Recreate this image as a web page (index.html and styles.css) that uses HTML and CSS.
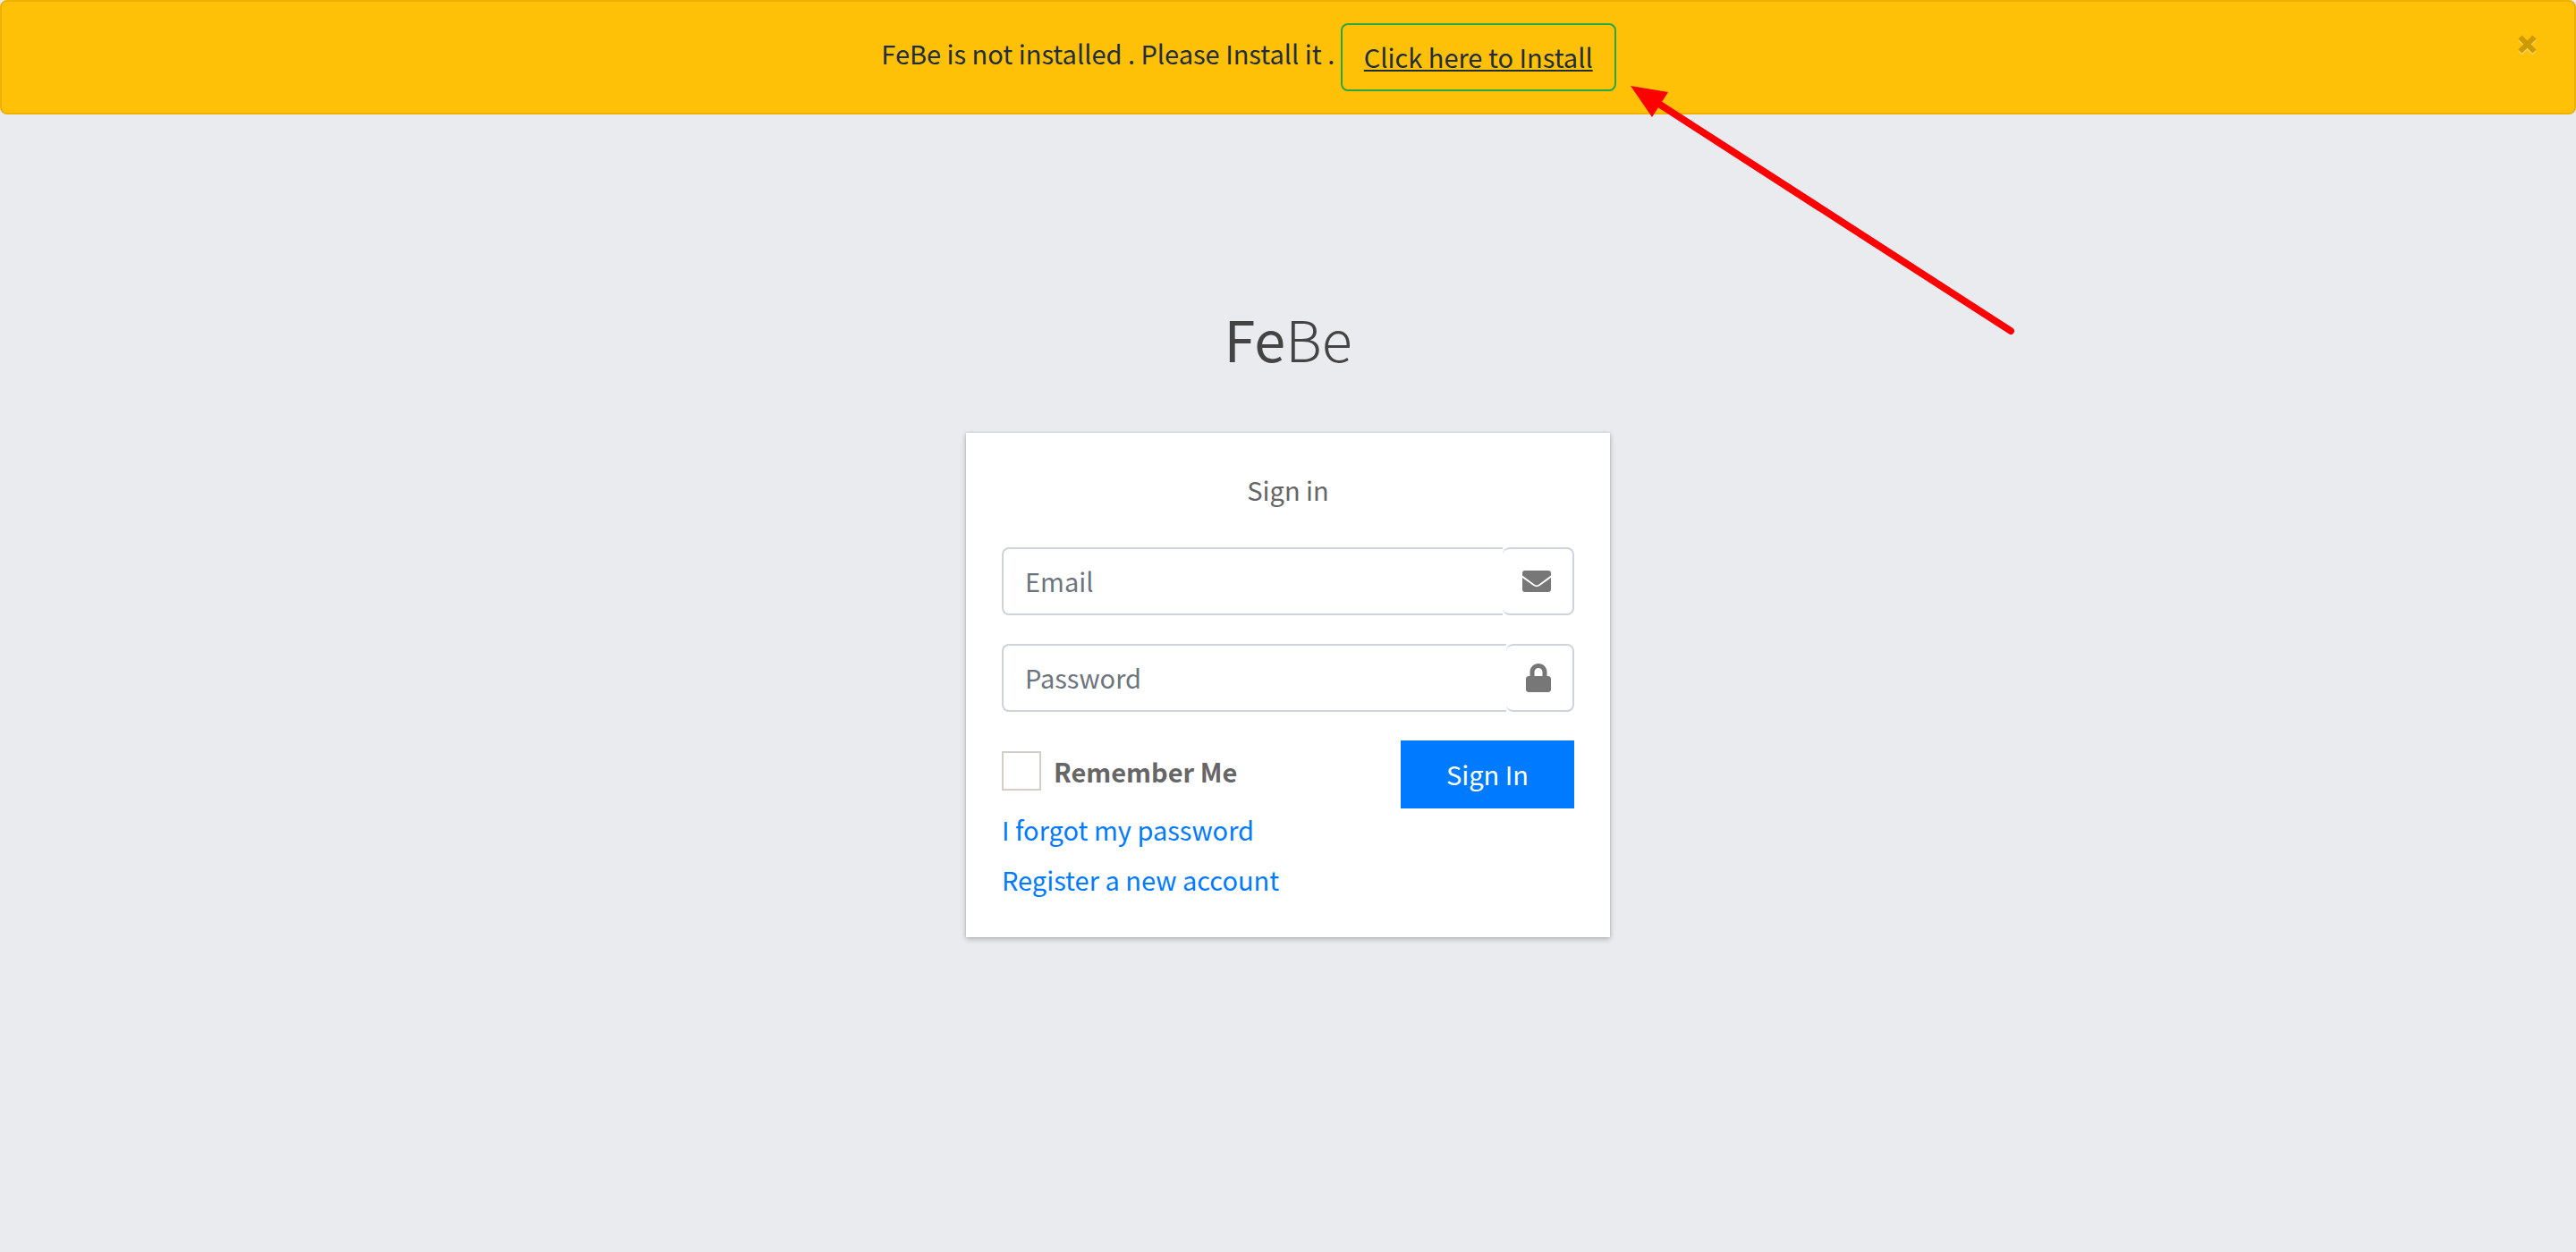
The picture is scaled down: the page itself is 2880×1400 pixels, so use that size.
FILE: index.html
```html
<!DOCTYPE html>
<html lang="en">
<head>
<meta charset="utf-8">
<meta name="viewport" content="width=device-width, initial-scale=1">
<title>FeBe | Sign in</title>
<link rel="stylesheet" href="styles.css">
</head>
<body>
<div class="alert" role="alert">
  <p class="alert-text">FeBe is not installed . Please Install it .
    <span class="install"><a class="install-link" href="#install">Click here to Install</a><svg class="arrow" viewBox="0 0 440 290" aria-hidden="true"><path d="M33 21 425 274" stroke="#f00" stroke-width="8" stroke-linecap="round"/><path d="M0 0 42 7 24 35Z" fill="#f00"/></svg></span>
  </p>
  <button class="close" type="button" aria-label="Close"><svg class="close-icon" viewBox="0 0 22 24" aria-hidden="true"><path d="M2.500 4.500 18.500 20.500M18.500 4.500 2.500 20.500" stroke="#ffd35a" stroke-width="6"/><path d="M2.500 2.500 18.500 18.500M18.500 2.500 2.500 18.500" stroke="#cc9a06" stroke-width="6"/></svg></button>
</div>
<main class="login">
  <h1 class="logo"><a href="#home"><b>Fe</b>Be</a></h1>
  <section class="card">
    <p class="card-title">Sign in</p>
    <form>
      <div class="group">
        <input class="field" type="email" placeholder="Email" aria-label="Email">
        <span class="addon"><svg class="envelope" viewBox="0 0 32 24" aria-hidden="true"><path d="M3 0H29A3 3 0 0 1 32 3V5.500L18.500 15.500Q16 17.300 13.500 15.500L0 5.500V3A3 3 0 0 1 3 0ZM0 8 12.500 17Q16 19.300 19.500 17L32 8V21A3 3 0 0 1 29 24H3A3 3 0 0 1 0 21Z"/></svg></span>
      </div>
      <div class="group">
        <input class="field" type="password" placeholder="Password" aria-label="Password">
        <span class="addon"><svg class="lock" viewBox="0 0 448 512" aria-hidden="true"><path d="M400 224h-24v-72C376 68.200 307.800 0 224 0S72 68.200 72 152v72H48c-26.500 0-48 21.500-48 48v192c0 26.500 21.500 48 48 48h352c26.500 0 48-21.500 48-48V272c0-26.500-21.500-48-48-48zm-104 0H152v-72c0-39.700 32.300-72 72-72s72 32.300 72 72v72z"/></svg></span>
      </div>
      <div class="actions">
        <label class="remember"><input class="check" type="checkbox">Remember Me</label>
        <button class="submit" type="submit">Sign In</button>
      </div>
    </form>
    <nav class="links">
      <a href="#forgot">I forgot my password</a>
      <a href="#register">Register a new account</a>
    </nav>
  </section>
</main>
</body>
</html>
```
FILE: styles.css
```css
* { box-sizing: border-box; }

body {
  margin: 0;
  min-height: 100vh;
  background: #eaebef;
  color: #212529;
  font-family: "Noto Sans CJK SC", "Noto Sans", sans-serif;
  font-size: 29px;
  line-height: 48px;
}

a { color: #007bff; text-decoration: none; }
p, h1 { margin: 0; }
svg { display: block; fill: none; }
input, button { font: inherit; }

.alert {
  position: relative;
  padding: 24px 128px 24px 40px;
  border: 2px solid #edb100;
  border-radius: 8px;
  background: #ffc107;
  color: #1f2d3d;
  text-align: center;
}

.install {
  display: inline-block;
  position: relative;
  vertical-align: middle;
}

.install-link {
  display: block;
  padding: 11px 24px 13px;
  border: 2px solid #28a745;
  border-radius: 8px;
  color: #1f2d3d;
  text-decoration: underline;
}

.arrow {
  position: absolute;
  z-index: 1;
  top: 70px;
  left: calc(100% + 16px);
  width: 440px;
  height: 290px;
  pointer-events: none;
}

.close {
  position: absolute;
  top: 0;
  right: 0;
  padding: 37px 41px;
  border: 0;
  background: none;
}

.close-icon { width: 22px; height: 24px; }

.login {
  width: 720px;
  max-width: 100%;
  margin: 0 auto;
  padding: 202px 0 40px;
}

.logo {
  margin-bottom: 58px;
  font-size: 63px;
  font-weight: 300;
  line-height: 96px;
  text-align: center;
}

.logo a { color: #444; }
.logo b { font-weight: 400; }

.card {
  padding: 39px 40px 41px;
  border-top: 1px solid #fff;
  background: #fff;
  box-shadow: 0 0 2px rgba(0, 0, 0, .13), 0 2px 6px rgba(0, 0, 0, .25);
  color: #666;
}

.card-title { margin-top: -1px; padding-bottom: 41px; text-align: center; }

.group { display: flex; margin-bottom: 32px; }

.field {
  flex: 1;
  min-width: 0;
  height: 76px;
  padding: 11px 24px 13px;
  border: 2px solid #ced4da;
  border-right: 0;
  border-radius: 8px 0 0 8px;
  background: #fff;
  color: #495057;
}

.field::placeholder { color: #6c757d; opacity: 1; }

.addon {
  display: flex;
  align-items: center;
  padding: 0 24px 0 22px;
  border: 2px solid #ced4da;
  border-left: 0;
  border-radius: 8px;
}

.addon svg { fill: #777; }
.envelope { width: 32px; height: 24px; }
.lock { width: 28px; height: 32px; }

.actions { display: flex; justify-content: space-between; }

.remember {
  display: flex;
  align-items: center;
  gap: 14px;
  height: 44px;
  margin-top: 12px;
  font-weight: 700;
}

.check {
  appearance: none;
  width: 44px;
  height: 44px;
  margin: 0;
  border: 2px solid #d3cfc8;
  background: #fff;
}

.submit {
  width: 194px;
  height: 76px;
  padding: 0 0 2px;
  border: 0;
  background: #007bff;
  color: #fff;
}

.links {
  display: flex;
  flex-direction: column;
  align-items: flex-start;
  gap: 8px;
  margin-top: -1px;
}
```
